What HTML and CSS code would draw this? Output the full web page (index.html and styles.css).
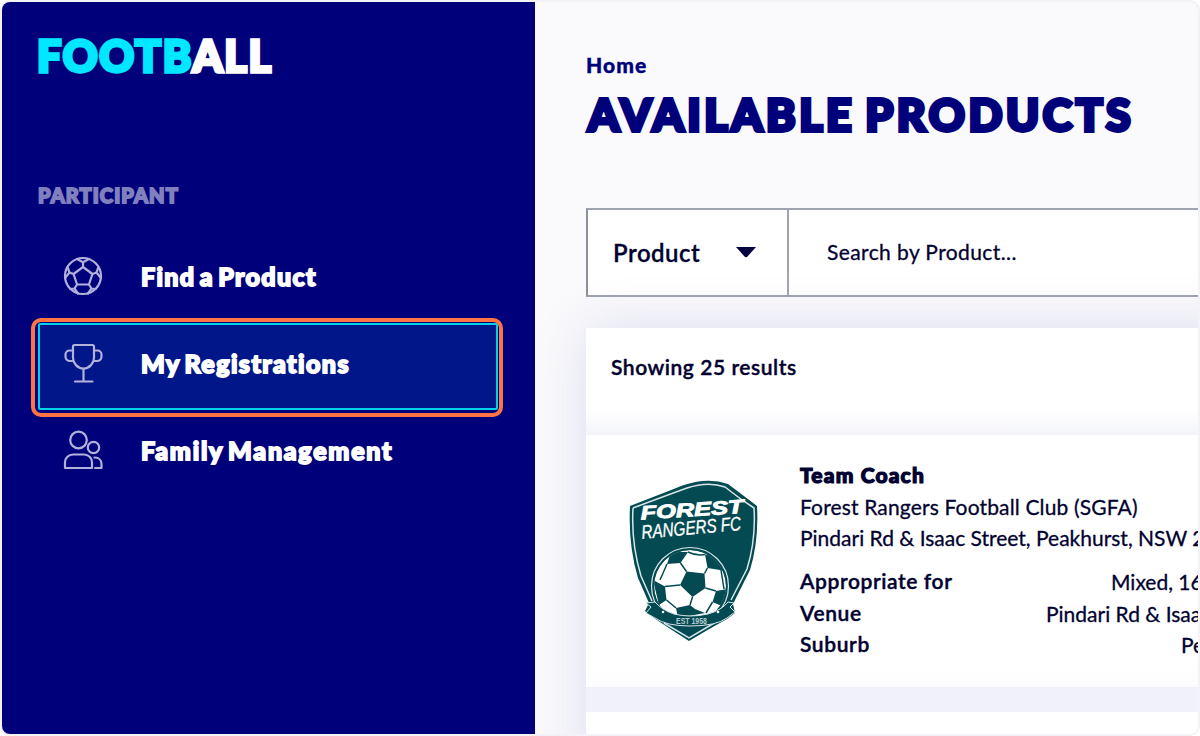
FILE: index.html
```
<!DOCTYPE html>
<html lang="en">
<head>
    <meta charset="UTF-8">
    <title>Available Products</title>
    <link rel="stylesheet" href="styles.css">
</head>
<body>
    <div class="frame">
        <aside class="sidebar">
            <div class="logo"><span class="logo-accent">FOOTB</span>ALL</div>
            <div class="nav-heading">PARTICIPANT</div>
            <nav class="nav">
                <a class="nav-item">
                    <svg class="nav-icon" viewBox="0 0 40 40">
                        <circle cx="20" cy="20" r="18"/>
                        <path d="M20 11l9.500 7-3.600 10.500H14.100L10.500 18zM20 11V6M29.500 18l4-1.500M25.900 28.500l2.600 4M14.100 28.500l-2.600 4M10.500 18l-4-1.500M14 3l6 3.200L26 3M35.500 11l-2 5.500L38 22M32.500 33l-4-.5L25 37.500M15 37.500l-3.500-5-4 .5M2 22l4.500-5.500-2-5.500"/>
                    </svg>
                    <span class="nav-label find">Find a Product</span>
                </a>
                <a class="nav-item active">
                    <svg class="nav-icon" viewBox="0 0 40 40">
                        <path d="M11.500 2h18a1.500 1.500 0 0 1 1.500 1.500V15c0 5-4.500 10.500-10.500 10.500S10 20 10 15V3.500A1.500 1.500 0 0 1 11.500 2zM10 7.500H6.500a4 4 0 0 0-4 4v2a4.500 4.500 0 0 0 4.500 4.500h3.500M31 7.500h3.500a4 4 0 0 1 4 4v2a4.500 4.500 0 0 1-4.500 4.500h-3.500M20.500 25.500v13M12 38.500h17.500"/>
                    </svg>
                    <span class="nav-label registrations">My Registrations</span>
                </a>
                <a class="nav-item">
                    <svg class="nav-icon" viewBox="0 0 40 40">
                        <circle cx="15.500" cy="10" r="8.300"/>
                        <circle cx="30.500" cy="17.500" r="5.700"/>
                        <path d="M2 38v-5.500a8 8 0 0 1 8-8h11a8 8 0 0 1 8 8V38zM31.500 27.500c4.500 0 7 3 7 6.500v4H32"/>
                    </svg>
                    <span class="nav-label family">Family Management</span>
                </a>
            </nav>
        </aside>

        <main class="main">
            <div class="breadcrumb">Home</div>
            <h1 class="title">AVAILABLE PRODUCTS</h1>

            <div class="search-bar">
                <div class="search-type">
                    <span>Product</span>
                    <svg class="caret" viewBox="0 0 20 11"><path d="M0 0h20l-8.500 9.500q-1.500 1.500-3 0z"/></svg>
                </div>
                <div class="search-input">Search by Product...</div>
            </div>

            <div class="results">
                <div class="results-count">Showing 25 results</div>
                <div class="product">
                    <svg class="crest" viewBox="0 0 132 164">
                        <!-- shield -->
                        <path fill="#044a53" d="M2 27Q38 13 56 6Q80-2 100 5Q116 17 129 27Q131 61 122 91L105 125L107 134L99 140Q79 151 61 162Q42 150 26 139L17 132L21 124L10 99Q0 66 2 27z"/>
                        <path fill="none" stroke="#d7e7e8" stroke-width="1.500" d="M5 29Q37 17 59 9Q80 2 97 8Q112 20 126 29Q128 61 119 90L103 121M5 29Q3 64 13 97L24 122M36 144L61 159L88 143"/>
                        <text class="crest-name" x="13" y="40.500" transform="rotate(-3.700 13 40.500)" textLength="103" lengthAdjust="spacingAndGlyphs">FOREST</text>
                        <text class="crest-sub" x="14" y="60" transform="rotate(-5.200 14 60)" textLength="100" lengthAdjust="spacingAndGlyphs">RANGERS FC</text>
                        <!-- ball -->
                        <clipPath id="ball"><circle cx="62" cy="107" r="36"/></clipPath>
                        <circle cx="62" cy="107" r="38.500" fill="#044a53" stroke="#d7e7e8" stroke-width="1.200"/>
                        <g clip-path="url(#ball)">
                            <circle cx="62" cy="107" r="36" fill="#fff"/>
                            <path fill="#044a53" d="M58.500 92.500L76.500 94.500L77.500 109L64.500 118L52 106zM39 85L43 73L60 73L52.500 84zM77 75.500L88 76L98 92L79.500 89zM25 101L37 107.500L38.500 121L31 126zM88 112L99 110L96 128L84.500 123zM48 129L62 126L67 130L77 134L50 139z"/>
                            <path fill="none" stroke="#044a53" stroke-width="1.500" d="M58.500 92.500L52.500 84M76.500 94.500L79.500 89M77.500 109L88 112M64.500 118L62 126M52 106L37 107.500M39 85L32 101M93 91L96 110M38.500 121L48 129M84.500 123L78 134M60 73Q68 77 77 75.500"/>
                        </g>
                        <!-- ribbon -->
                        <path fill="#044a53" stroke="#d7e7e8" stroke-width="1" d="M18 124L27 123Q34 131 46 135Q62 139 80 135Q94 131 100 123L106 124L102 128L107 133L99 139Q88 147 62 147Q38 147 27 139L18 134L23 128z"/>
                        <text class="crest-year" x="48" y="145" textLength="31" lengthAdjust="spacingAndGlyphs">EST 1958</text>
                        <circle cx="35" cy="133" r="1.300" fill="#fff"/>
                        <circle cx="90" cy="133" r="1.300" fill="#fff"/>
                    </svg>
                    <div class="product-info">
                        <div class="product-name">Team Coach</div>
                        <div class="product-club">Forest Rangers Football Club (SGFA)</div>
                        <div class="product-address">Pindari Rd &amp; Isaac Street, Peakhurst, NSW 2210</div>
                        <div class="details">
                            <div class="detail"><b class="d1">Appropriate for</b><span>Mixed, 16 - 99</span></div>
                            <div class="detail"><b class="d2">Venue</b><span>Pindari Rd &amp; Isaac Street</span></div>
                            <div class="detail"><b class="d3">Suburb</b><span>Peakhurst</span></div>
                        </div>
                    </div>
                </div>
                <div class="product next"></div>
            </div>
        </main>
    </div>
</body>
</html>
```
FILE: styles.css
```
* {
    box-sizing: border-box;
}
body {
    margin: 0;
    background-color: #fff;
    font-family: Lato, "Liberation Sans", sans-serif;
    color: #020230;
}
.frame {
    display: flex;
    width: 1200px;
    height: 736px;
    border: 2px solid #f3f2f7;
    border-radius: 10px;
    background-color: #fafafc;
    overflow: hidden;
}

/* Sidebar */
.sidebar {
    flex: none;
    width: 533px;
    padding: 29px 36px 0 35px;
    background-color: #00007b;
    color: #fff;
}
.logo {
    line-height: 50px;
    font-size: 43px;
    font-weight: 900;
    letter-spacing: 1.7px;
    -webkit-text-stroke: 3.4px;
}
.logo-accent {
    color: #00e8ff;
}
.nav-heading {
    margin-top: 102px;
    padding-left: 1px;
    line-height: 24px;
    font-size: 20px;
    font-weight: 900;
    letter-spacing: 1.1px;
    color: #8080be;
    -webkit-text-stroke: 1.8px;
}
.nav {
    margin-top: 25px;
}
.nav-item {
    position: relative;
    display: flex;
    align-items: center;
    height: 87px;
    padding-left: 26px;
    gap: 37px;
}
.nav-icon {
    position: relative;
    width: 40px;
    height: 40px;
    fill: none;
    stroke: #b1b1dc;
    stroke-width: 2.2;
    stroke-linejoin: round;
    stroke-linecap: round;
}
.nav-label {
    position: relative;
    padding-left: 1px;
    font-size: 25px;
    font-weight: 900;
    word-spacing: -3px;
    white-space: nowrap;
    -webkit-text-stroke: 1.8px;
}
.find { letter-spacing: 1.35px; }
.registrations { letter-spacing: 1.45px; }
.family { letter-spacing: 1.75px; }
.nav-item.active::before {
    content: "";
    position: absolute;
    inset: 4px 1px -4px;
    border: 2px solid #00d0e8;
    border-radius: 2px;
    background-color: #001689;
}
.nav-item.active::after {
    content: "";
    position: absolute;
    inset: -1px -4px -11px -6px;
    border: 4px solid #ff7442;
    border-radius: 10px;
}

/* Main column */
.main {
    flex: none;
    width: 900px;
    padding: 51px 0 0 51px;
}
.breadcrumb {
    line-height: 24px;
    font-size: 21px;
    font-weight: 900;
    letter-spacing: 1.1px;
    color: #00007b;
    -webkit-text-stroke: 0.4px;
}
.title {
    margin: 12px 0 0;
    padding-left: 2px;
    line-height: 50px;
    font-size: 44.5px;
    font-weight: 900;
    letter-spacing: 3.6px;
    word-spacing: -4px;
    color: #00007b;
    white-space: nowrap;
    -webkit-text-stroke: 3.8px;
}
.search-bar {
    display: flex;
    height: 89px;
    margin-top: 69px;
    border: 2px solid #a0a3b0;
    border-left-color: #8d909f;
    background-color: #fff;
}
.search-type {
    display: flex;
    align-items: center;
    justify-content: space-between;
    width: 201px;
    padding: 0 31px 0 25px;
    border-right: 2px solid #a0a3b0;
    font-size: 24px;
    font-weight: 600;
    letter-spacing: 0.5px;
    -webkit-text-stroke: 0.3px;
}
.caret {
    width: 20px;
    height: 11px;
    fill: #03033f;
}
.search-input {
    display: flex;
    align-items: center;
    padding: 0 0 2px 38px;
    font-size: 21px;
    letter-spacing: 0.4px;
    -webkit-text-stroke: 0.3px;
}

/* Results list */
.results {
    margin-top: 31px;
    height: 500px;
    background-color: #fff;
    box-shadow: 0 0 50px rgba(60, 70, 170, 0.16);
}
.results-count {
    height: 107px;
    padding: 27px 25px 0;
    line-height: 24px;
    font-size: 21px;
    font-weight: 600;
    letter-spacing: 0.55px;
    background: linear-gradient(#fff 78%, #f3f4fa);
    -webkit-text-stroke: 0.4px;
}
.product {
    display: flex;
    height: 252px;
    padding: 24px 0 0 42px;
    background-color: #fff;
    background-image: linear-gradient(#fff 92%, #fcfcfd);
}
.crest {
    flex: none;
    width: 132px;
    height: 164px;
    margin-top: 20px;
}
.crest-name {
    font: italic 900 19px "Liberation Sans", Arial, sans-serif;
    fill: #fff;
    stroke: #fff;
    stroke-width: 0.9px;
}
.crest-sub {
    font: italic 19.5px "Liberation Sans", Arial, sans-serif;
    fill: #fff;
    stroke: #fff;
    stroke-width: 0.3px;
}
.crest-year {
    font: bold 9px "Liberation Sans", Arial, sans-serif;
    fill: #b5cdd0;
}
.product-info {
    width: 500px;
    margin-left: 40px;
    line-height: 31.5px;
    font-size: 21px;
    white-space: nowrap;
    -webkit-text-stroke: 0.3px;
}
.product-name {
    font-weight: 900;
    letter-spacing: 1.15px;
    -webkit-text-stroke: 1.2px;
}
.product-club {
    letter-spacing: 0.15px;
}
.details {
    margin-top: 11.5px;
}
.detail {
    display: flex;
}
.detail b {
    font-weight: 600;
    letter-spacing: 0.6px;
    -webkit-text-stroke: 0.4px;
}
.detail span {
    padding-top: 1px;
    height: 31.5px;
}
.d1 { width: 311px; }
.d2 { width: 246px; }
.d3 { width: 381px; }
.next {
    height: 100px;
    border-top: 25px solid #f0f1f9;
}
```
